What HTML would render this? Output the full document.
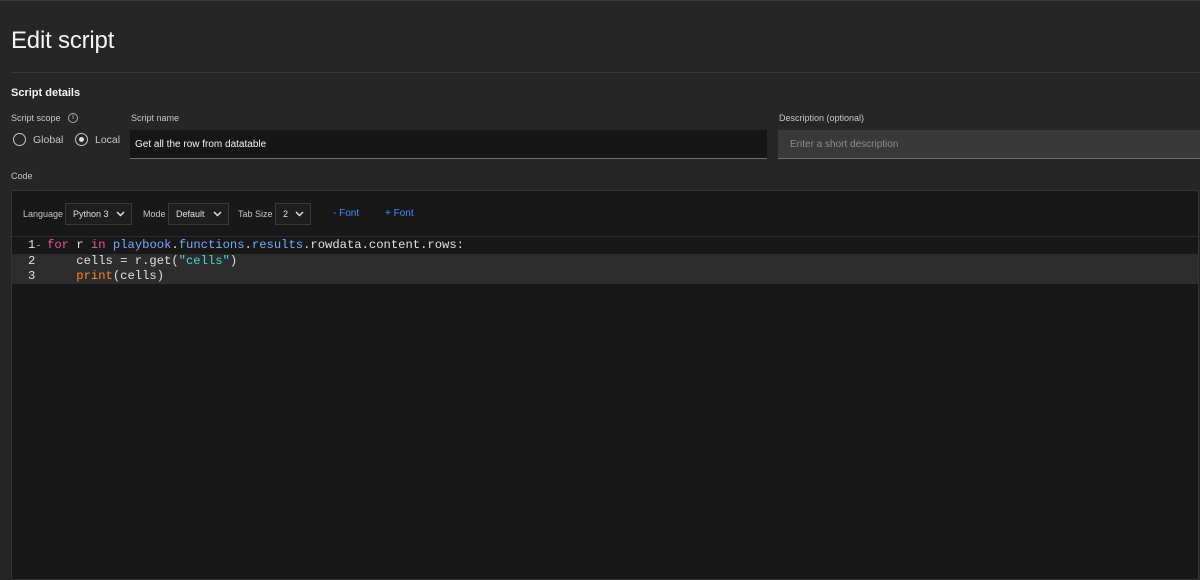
<!DOCTYPE html>
<html><head><meta charset="utf-8"><style>
*{box-sizing:border-box;margin:0;padding:0}
body{width:1200px;height:580px;background:#262626;font-family:"Liberation Sans",sans-serif;color:#e0e0e0;position:relative;overflow:hidden;border-top:1px solid #3a3a3a}
.abs{position:absolute}
h1{position:absolute;left:11px;top:26px;font-size:24px;font-weight:400;color:#f4f4f4;letter-spacing:-0.2px}
.div{left:11px;right:0;top:71px;height:1px;background:#393939}
.lbl{font-size:9px;color:#c6c6c6}
.inp{height:29px;border-bottom:1px solid #6f6f6f;font-size:10px;padding:9px 5px}
.radio{width:13px;height:13px;border:1px solid #c6c6c6;border-radius:50%;position:absolute}
.sel{position:absolute;top:202px;height:22px;border:1px solid #393939;background:#1e1e1e;font-size:9px;color:#e0e0e0;padding:5px 7px}
.sel svg{position:absolute;right:6px;top:7px}
.tl{position:absolute;top:208px;font-size:9px;color:#c6c6c6}
.code{font-family:"Liberation Mono",monospace;font-size:12.2px;white-space:pre;position:absolute;left:47px;color:#e0e0e0}
.ln{font-family:"Liberation Mono",monospace;font-size:12.2px;position:absolute;left:28px;color:#e0e0e0}
</style></head><body>
<h1>Edit script</h1>
<div class="abs div"></div>
<div class="abs" style="left:11px;top:86px;font-size:11px;font-weight:700;color:#f4f4f4">Script details</div>
<div class="abs lbl" style="left:11px;top:112px">Script scope</div>
<div class="abs" style="left:68px;top:112px;width:10px;height:10px;border:1px solid #a8a8a8;border-radius:50%;font-size:7px;text-align:center;line-height:8px;color:#c6c6c6">i</div>
<div class="radio" style="left:13px;top:132px"></div>
<div class="abs" style="left:33px;top:133px;font-size:10.5px;color:#c6c6c6">Global</div>
<div class="radio" style="left:75px;top:132px"><div style="position:absolute;left:3px;top:3px;width:5px;height:5px;background:#e0e0e0;border-radius:50%"></div></div>
<div class="abs" style="left:95px;top:133px;font-size:10.5px;color:#c6c6c6">Local</div>
<div class="abs lbl" style="left:131px;top:112px">Script name</div>
<div class="abs inp" style="left:130px;top:129px;width:637px;background:#161616;color:#f4f4f4">Get all the row from datatable</div>
<div class="abs lbl" style="left:779px;top:112px">Description (optional)</div>
<div class="abs inp" style="left:778px;top:129px;width:422px;background:#393939;color:#8d8d8d;padding-left:12px">Enter a short description</div>
<div class="abs lbl" style="left:11px;top:170px">Code</div>
<div class="abs" style="left:11px;top:189px;width:1188px;height:390px;background:#181818;border:1px solid #333"></div>
<div class="abs" style="left:12px;top:235px;width:1186px;height:1px;background:#2c2c2c"></div>
<div class="tl" style="left:23px">Language</div>
<div class="sel" style="left:65px;width:67px">Python 3<svg width="9" height="6"><path d="M1 1l3.5 3.5L8 1" stroke="#e0e0e0" stroke-width="1.5" fill="none"/></svg></div>
<div class="tl" style="left:143px">Mode</div>
<div class="sel" style="left:168px;width:61px">Default<svg width="9" height="6"><path d="M1 1l3.5 3.5L8 1" stroke="#e0e0e0" stroke-width="1.5" fill="none"/></svg></div>
<div class="tl" style="left:238px">Tab Size</div>
<div class="sel" style="left:275px;width:36px">2<svg width="9" height="6"><path d="M1 1l3.5 3.5L8 1" stroke="#e0e0e0" stroke-width="1.5" fill="none"/></svg></div>
<div class="tl" style="left:333px;color:#4589ff;font-size:10px;top:207px">- Font</div>
<div class="tl" style="left:385px;color:#4589ff;font-size:10px;top:207px">+ Font</div>
<div class="abs" style="left:12px;top:253px;width:1186px;height:30px;background:#2d2d2d"></div>
<div class="ln" style="top:237px">1</div><div class="abs" style="left:37px;top:244px;width:3px;height:1px;background:#888"></div>
<div class="ln" style="top:253px">2</div>
<div class="ln" style="top:268px">3</div>
<div class="code" style="top:237px"><span style="color:#ee5396">for</span> r <span style="color:#ee5396">in</span> <span style="color:#78a9ff">playbook</span>.<span style="color:#78a9ff">functions</span>.<span style="color:#78a9ff">results</span>.rowdata.content.rows:</div>
<div class="code" style="top:253px">    cells = r.get(<span style="color:#3ddbd9">"cells"</span>)</div>
<div class="code" style="top:268px">    <span style="color:#ff832b">print</span>(cells)</div>
</body></html>
